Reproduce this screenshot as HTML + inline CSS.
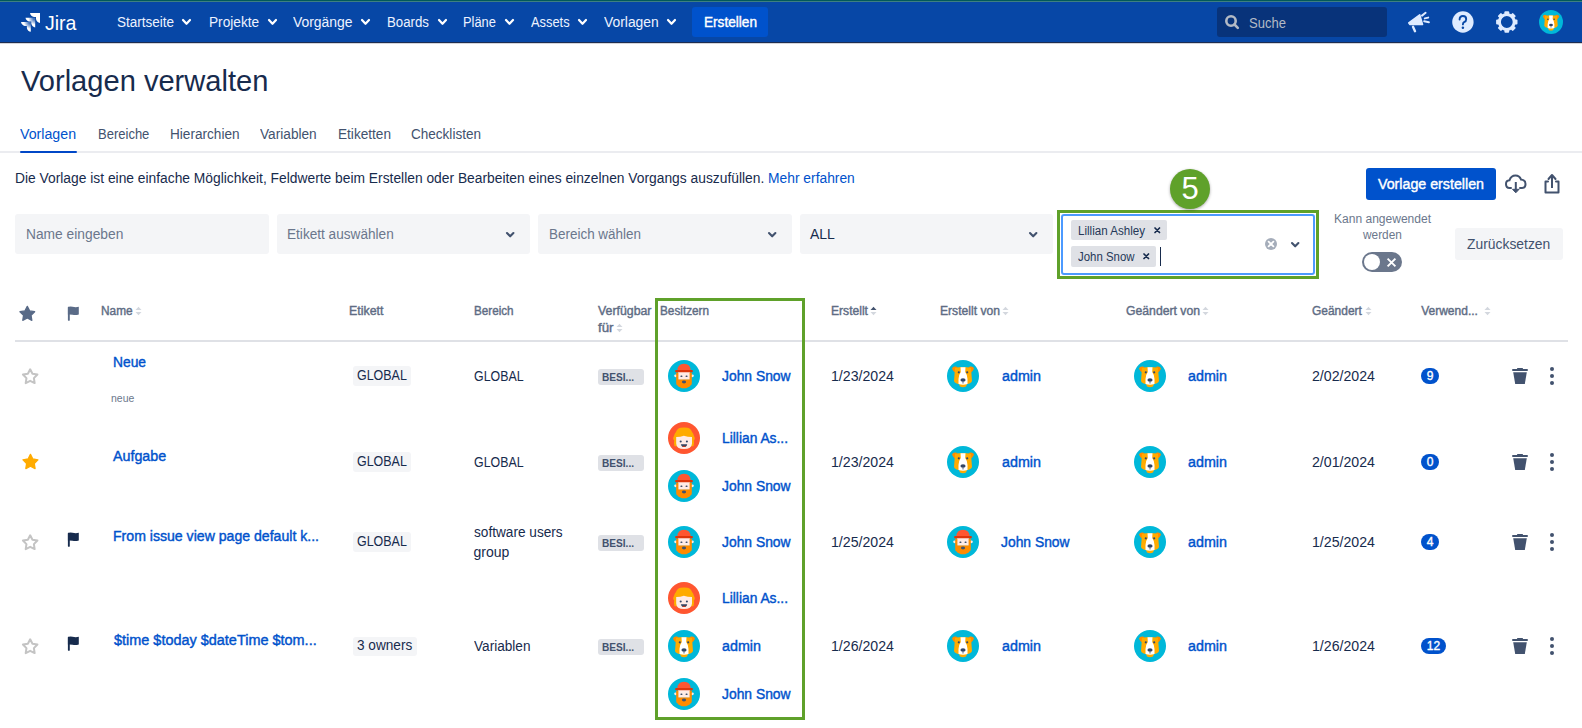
<!DOCTYPE html>
<html><head><meta charset="utf-8">
<style>
*{box-sizing:border-box;margin:0;padding:0}
html,body{width:1582px;height:728px;overflow:hidden;background:#fff}
body{position:relative;font-family:"Liberation Sans",sans-serif;color:#172b4d}
.a{position:absolute}
.t{position:absolute;white-space:nowrap;line-height:1}
svg{display:block;overflow:visible}
</style></head><body>
<svg width="0" height="0" style="position:absolute"><defs>
<symbol id="dog" viewBox="0 0 32 32">
<circle cx="16" cy="16" r="16" fill="#00b8d9"/>
<path d="M5 8.5 Q6 6 9 6.5 L11 8 L10 13 Q6.5 12.5 5 8.5Z" fill="#ff8b00"/>
<path d="M27 8.5 Q26 6 23 6.5 L21 8 L22 13 Q25.5 12.5 27 8.5Z" fill="#ff8b00"/>
<path d="M8 8 Q16 6 24 8 L25 21 Q24 23.5 20 24 L19 26.5 Q16 28 13 26.5 L12 24 Q8 23.5 7 21Z" fill="#ffab00"/>
<path d="M13.5 7.3 H18.5 L18.2 12 Q20.5 15 20.5 19 L20.5 24 Q16 25.5 11.5 24 L11.5 19 Q11.5 15 13.8 12Z" fill="#fff"/>
<circle cx="11.8" cy="12.3" r="1.1" fill="#344563"/><circle cx="20.2" cy="12.3" r="1.1" fill="#344563"/>
<ellipse cx="16" cy="20" rx="2.6" ry="1.7" fill="#344563"/>
<path d="M16 21.5 V23.5" stroke="#344563" stroke-width="0.8"/>
</symbol>
<symbol id="john" viewBox="0 0 32 32">
<circle cx="16" cy="16" r="16" fill="#00b8d9"/>
<circle cx="7.6" cy="15.8" r="1.4" fill="#ffebe6"/><circle cx="24.4" cy="15.8" r="1.4" fill="#ffebe6"/>
<rect x="10" y="11" width="12" height="8.8" fill="#ffebe6"/>
<path d="M8.2 12.5 H10.4 V19.6 H21.6 V12.5 H23.8 V23.2 Q23.8 25.2 22.4 25.6 Q21.8 27.4 19.6 27.4 Q18.2 28.4 16 28.3 Q13.8 28.4 12.4 27.4 Q10.2 27.4 9.6 25.6 Q8.2 25.2 8.2 23.2Z" fill="#ff8b00"/>
<ellipse cx="16" cy="22" rx="2.1" ry="1.4" fill="#42526e"/>
<rect x="12.5" y="15.6" width="1.9" height="1.5" fill="#42526e" rx=".5"/><rect x="17.6" y="15.6" width="1.9" height="1.5" fill="#42526e" rx=".5"/>
<path d="M9.4 10.6 Q9.4 3.7 16 3.7 Q22.6 3.7 22.6 10.6Z" fill="#ff5630"/>
<rect x="7.2" y="10" width="17.6" height="2.2" rx=".8" fill="#de350b"/>
</symbol>
<symbol id="lil" viewBox="0 0 32 32">
<circle cx="16" cy="16" r="16" fill="#ff5630"/>
<path d="M6.5 24.3 Q5.5 21 6.2 18.5 Q4.3 16.5 6 14 Q6.5 11.5 8 10 Q9 6.5 12.5 5.8 Q16 5 19.5 5.8 Q23 6.5 24 10 Q25.5 11.5 26 14 Q27.7 16.5 25.8 18.5 Q26.5 21 25.5 24.3 Z" fill="#ffab00"/>
<path d="M8.2 15 Q12.5 15 15.9 13.8 Q19.5 15 24 15 L24 21.5 Q23.6 27.1 16 27.1 Q8.4 27.1 8.2 21.5Z" fill="#ffebe6"/>
<circle cx="12.7" cy="19.5" r="1.05" fill="#344563"/><circle cx="18.9" cy="19.5" r="1.05" fill="#344563"/>
<path d="M12.9 22.3 H19.2 Q18.8 25.1 16 25.1 Q13.3 25.1 12.9 22.3Z" fill="#344563"/>
<path d="M14.4 24.3 Q16 23.4 17.7 24.3 Q16.9 25 16 25 Q15.1 25 14.4 24.3Z" fill="#de350b"/>
</symbol>
<symbol id="star" viewBox="0 0 24 24"><path d="M12.00 3.90 L14.70 9.18 L20.56 10.12 L16.37 14.32 L17.29 20.18 L12.00 17.50 L6.71 20.18 L7.63 14.32 L3.44 10.12 L9.30 9.18Z" stroke-linejoin="round"/></symbol>
<symbol id="flag" viewBox="0 0 12 15"><rect x="0.9" y="0.8" width="1.9" height="14" rx=".9"/><path d="M0.9 0.9 Q3 0.2 5.5 0.7 Q8.5 1.5 11.8 0.8 V8.6 Q8.5 9.5 5.5 8.8 Q3 8.2 0.9 8.5 Z"/></symbol>
<symbol id="trash" viewBox="0 0 16 17"><rect x="5" y="0" width="6" height="2" rx=".6"/><rect x="0" y="1.1" width="16" height="2" rx="1"/><path d="M1.2 4.2 H14.8 L12.8 16.1 H3.2 Z"/></symbol>
<symbol id="more" viewBox="0 0 6 18"><circle cx="3" cy="2" r="2"/><circle cx="3" cy="9" r="2"/><circle cx="3" cy="16" r="2"/></symbol>
</defs></svg>
<div class="a" style="left:0px;top:0px;width:1582px;height:43px;background:#0747a6;"></div>
<div class="a" style="left:0px;top:0px;width:1582px;height:1px;background:#02595b;"></div>
<div class="a" style="left:0px;top:1px;width:1582px;height:1px;background:#3e8080;"></div>
<div class="a" style="left:0px;top:42px;width:1582px;height:1px;background:#1d2d50;"></div>
<div class="a" style="left:0px;top:43px;width:1582px;height:1px;background:#d4d5da;"></div>
<svg class="a" style="left:18px;top:10px;" width="26" height="24" viewBox="0 0 26 24"><defs><radialGradient id="jg" cx="10" cy="0" r="11" gradientUnits="userSpaceOnUse"><stop offset="0.2" stop-color="#fff" stop-opacity="0.25"/><stop offset="0.65" stop-color="#fff" stop-opacity="1"/></radialGradient></defs>
<path transform="translate(12 3)" d="M0 0 L10 0 L10 10 C8.2 9.7 6.3 8.2 6 6 L6 4 L4 4 C2 3.7 0.3 2 0 0 Z" fill="#fff"/>
<path transform="translate(7.5 7.7) scale(0.97)" d="M0 0 L10 0 L10 10 C8.2 9.7 6.3 8.2 6 6 L6 4 L4 4 C2 3.7 0.3 2 0 0 Z" fill="url(#jg)"/>
<path transform="translate(3 12) scale(0.98)" d="M0 0 L10 0 L10 10 C8.2 9.7 6.3 8.2 6 6 L6 4 L4 4 C2 3.7 0.3 2 0 0 Z" fill="url(#jg)"/></svg>
<div class="t" style="left:44.70px;top:12.42px;font-size:21px;color:#fff;transform:scaleX(0.9292);transform-origin:0 0;">Jira</div>
<div class="t" style="left:117.20px;top:15.15px;font-size:14px;color:#eef3ff;transform:scaleX(0.9645);transform-origin:0 0;">Startseite</div>
<svg class="a" style="left:182px;top:19px;" width="9" height="6" viewBox="0 0 9 6"><path d="M1 1 L4.5 4.8 L8 1" fill="none" stroke="#fff" stroke-width="2.2" stroke-linecap="round" stroke-linejoin="round"/></svg>
<div class="t" style="left:208.70px;top:15.15px;font-size:14px;color:#eef3ff;transform:scaleX(0.9767);transform-origin:0 0;">Projekte</div>
<svg class="a" style="left:267.5px;top:19px;" width="9" height="6" viewBox="0 0 9 6"><path d="M1 1 L4.5 4.8 L8 1" fill="none" stroke="#fff" stroke-width="2.2" stroke-linecap="round" stroke-linejoin="round"/></svg>
<div class="t" style="left:293.00px;top:15.15px;font-size:14px;color:#eef3ff;transform:scaleX(0.9933);transform-origin:0 0;">Vorgänge</div>
<svg class="a" style="left:361px;top:19px;" width="9" height="6" viewBox="0 0 9 6"><path d="M1 1 L4.5 4.8 L8 1" fill="none" stroke="#fff" stroke-width="2.2" stroke-linecap="round" stroke-linejoin="round"/></svg>
<div class="t" style="left:387.00px;top:15.15px;font-size:14px;color:#eef3ff;transform:scaleX(0.9459);transform-origin:0 0;">Boards</div>
<svg class="a" style="left:437.5px;top:19px;" width="9" height="6" viewBox="0 0 9 6"><path d="M1 1 L4.5 4.8 L8 1" fill="none" stroke="#fff" stroke-width="2.2" stroke-linecap="round" stroke-linejoin="round"/></svg>
<div class="t" style="left:463.40px;top:15.15px;font-size:14px;color:#eef3ff;transform:scaleX(0.9190);transform-origin:0 0;">Pläne</div>
<svg class="a" style="left:505px;top:19px;" width="9" height="6" viewBox="0 0 9 6"><path d="M1 1 L4.5 4.8 L8 1" fill="none" stroke="#fff" stroke-width="2.2" stroke-linecap="round" stroke-linejoin="round"/></svg>
<div class="t" style="left:530.70px;top:15.15px;font-size:14px;color:#eef3ff;transform:scaleX(0.9190);transform-origin:0 0;">Assets</div>
<svg class="a" style="left:578px;top:19px;" width="9" height="6" viewBox="0 0 9 6"><path d="M1 1 L4.5 4.8 L8 1" fill="none" stroke="#fff" stroke-width="2.2" stroke-linecap="round" stroke-linejoin="round"/></svg>
<div class="t" style="left:603.60px;top:15.15px;font-size:14px;color:#eef3ff;transform:scaleX(0.9910);transform-origin:0 0;">Vorlagen</div>
<svg class="a" style="left:667px;top:19px;" width="9" height="6" viewBox="0 0 9 6"><path d="M1 1 L4.5 4.8 L8 1" fill="none" stroke="#fff" stroke-width="2.2" stroke-linecap="round" stroke-linejoin="round"/></svg>
<div class="a" style="left:692px;top:7px;width:76px;height:30px;background:#0052cc;border-radius:3px"></div>
<div class="t" style="left:704.00px;top:14.95px;font-size:14px;color:#fff;-webkit-text-stroke:0.4px #fff;transform:scaleX(0.9725);transform-origin:0 0;">Erstellen</div>
<div class="a" style="left:1217px;top:7px;width:170px;height:30px;background:#08337a;border-radius:3px"></div>
<svg class="a" style="left:1224px;top:14px;" width="16" height="16" viewBox="0 0 16 16"><circle cx="7" cy="7" r="4.7" fill="none" stroke="#b3bac5" stroke-width="2.6"/><path d="M10.5 10.5 L13.8 13.8" stroke="#b3bac5" stroke-width="2.6" stroke-linecap="round"/></svg>
<div class="t" style="left:1249.00px;top:16.15px;font-size:14px;color:#b3bac5;transform:scaleX(0.9320);transform-origin:0 0;">Suche</div>
<svg class="a" style="left:1400px;top:6px;" width="32" height="30" viewBox="0 0 32 30"><path d="M8.8 16.9 L19.7 8.8 L22.5 18.4 L10 18.4 Z" fill="#deebff" stroke="#deebff" stroke-width="1.6" stroke-linejoin="round"/>
<path d="M13 20.8 L15 25.2" stroke="#deebff" stroke-width="2.4" stroke-linecap="round"/>
<path d="M22 9.6 L25.6 6.8 M24.8 12.4 L28.2 11.6 M24.2 15.3 L28.9 16.3" stroke="#deebff" stroke-width="2" stroke-linecap="round"/></svg>
<svg class="a" style="left:1451px;top:11px;" width="24" height="24" viewBox="0 0 24 24"><circle cx="11.9" cy="11" r="10.7" fill="#deebff"/>
<path d="M8.6 8.6 Q8.6 5 11.9 5 Q15.2 5 15.2 8.2 Q15.2 10.3 13.1 11.2 Q11.9 11.8 11.9 13.4" fill="none" stroke="#0747a6" stroke-width="1.9" stroke-linecap="round"/>
<circle cx="11.9" cy="16.8" r="1.25" fill="#0747a6"/></svg>
<svg class="a" style="left:1495px;top:11px;" width="24" height="24" viewBox="0 0 24 24"><g transform="translate(11.8 11)"><rect x="-2.4" y="-10.7" width="4.8" height="4.5" rx="1" fill="#deebff" transform="rotate(0)"/><rect x="-2.4" y="-10.7" width="4.8" height="4.5" rx="1" fill="#deebff" transform="rotate(45)"/><rect x="-2.4" y="-10.7" width="4.8" height="4.5" rx="1" fill="#deebff" transform="rotate(90)"/><rect x="-2.4" y="-10.7" width="4.8" height="4.5" rx="1" fill="#deebff" transform="rotate(135)"/><rect x="-2.4" y="-10.7" width="4.8" height="4.5" rx="1" fill="#deebff" transform="rotate(180)"/><rect x="-2.4" y="-10.7" width="4.8" height="4.5" rx="1" fill="#deebff" transform="rotate(225)"/><rect x="-2.4" y="-10.7" width="4.8" height="4.5" rx="1" fill="#deebff" transform="rotate(270)"/><rect x="-2.4" y="-10.7" width="4.8" height="4.5" rx="1" fill="#deebff" transform="rotate(315)"/><circle r="7.4" fill="none" stroke="#deebff" stroke-width="3"/></g></svg>
<!--NAVAV-->
<div class="t" style="left:21.00px;top:66.75px;font-size:29px;color:#172b4d;transform:scaleX(1.0028);transform-origin:0 0;">Vorlagen verwalten</div>
<div class="t" style="left:20.30px;top:126.65px;font-size:14px;color:#0052cc;transform:scaleX(1.0145);transform-origin:0 0;">Vorlagen</div>
<div class="t" style="left:97.60px;top:126.65px;font-size:14px;color:#42526e;transform:scaleX(0.9295);transform-origin:0 0;">Bereiche</div>
<div class="t" style="left:170.00px;top:126.65px;font-size:14px;color:#42526e;transform:scaleX(0.9721);transform-origin:0 0;">Hierarchien</div>
<div class="t" style="left:259.60px;top:126.65px;font-size:14px;color:#42526e;transform:scaleX(0.9759);transform-origin:0 0;">Variablen</div>
<div class="t" style="left:337.50px;top:126.65px;font-size:14px;color:#42526e;transform:scaleX(0.9725);transform-origin:0 0;">Etiketten</div>
<div class="t" style="left:411.00px;top:126.65px;font-size:14px;color:#42526e;transform:scaleX(0.9669);transform-origin:0 0;">Checklisten</div>
<div class="a" style="left:0px;top:151px;width:1582px;height:2px;background:#ebecf0;"></div>
<div class="a" style="left:20px;top:151px;width:57px;height:2px;background:#0047c7;border-radius:1px"></div>
<div class="t" style="left:14.90px;top:171.15px;font-size:14px;color:#172b4d;transform:scaleX(0.9864);transform-origin:0 0;">Die Vorlage ist eine einfache Möglichkeit, Feldwerte beim Erstellen oder Bearbeiten eines einzelnen Vorgangs auszufüllen. <span style="color:#0052cc">Mehr erfahren</span></div>
<div class="a" style="left:15px;top:214px;width:254px;height:40px;background:#f4f5f7;border-radius:3px"></div>
<div class="t" style="left:25.70px;top:227.15px;font-size:14px;color:#6b778c;transform:scaleX(0.9848);transform-origin:0 0;">Name eingeben</div>
<div class="a" style="left:277px;top:214px;width:253px;height:40px;background:#f4f5f7;border-radius:3px"></div>
<div class="t" style="left:287.00px;top:227.15px;font-size:14px;color:#6b778c;transform:scaleX(0.9727);transform-origin:0 0;">Etikett auswählen</div>
<svg class="a" style="left:506.3px;top:231.9px;" width="8.4" height="5.5" viewBox="0 0 8.4 5.5"><path d="M1 1 L4.2 4.3 L7.4 1" fill="none" stroke="#42526e" stroke-width="2.1" stroke-linecap="round" stroke-linejoin="round"/></svg>
<div class="a" style="left:538px;top:214px;width:254px;height:40px;background:#f4f5f7;border-radius:3px"></div>
<div class="t" style="left:549.00px;top:227.15px;font-size:14px;color:#6b778c;transform:scaleX(0.9613);transform-origin:0 0;">Bereich wählen</div>
<svg class="a" style="left:767.8px;top:231.9px;" width="8.4" height="5.5" viewBox="0 0 8.4 5.5"><path d="M1 1 L4.2 4.3 L7.4 1" fill="none" stroke="#42526e" stroke-width="2.1" stroke-linecap="round" stroke-linejoin="round"/></svg>
<div class="a" style="left:800px;top:214px;width:253px;height:40px;background:#f4f5f7;border-radius:3px"></div>
<div class="t" style="left:810.00px;top:227.15px;font-size:14px;color:#172b4d;">ALL</div>
<svg class="a" style="left:1029px;top:231.9px;" width="8.4" height="5.5" viewBox="0 0 8.4 5.5"><path d="M1 1 L4.2 4.3 L7.4 1" fill="none" stroke="#42526e" stroke-width="2.1" stroke-linecap="round" stroke-linejoin="round"/></svg>
<div class="a" style="left:1057px;top:210px;width:262px;height:69px;background:transparent;border:3px solid #5fa12a"></div>
<div class="a" style="left:1061px;top:214px;width:254px;height:61px;background:#fff;border:2px solid #4c9aff;border-radius:3px"></div>
<div class="a" style="left:1071px;top:220px;width:96px;height:20px;background:#dfe1e6;border-radius:2px"></div>
<div class="t" style="left:1078.00px;top:224.84px;font-size:12px;color:#253858;transform:scaleX(0.9654);transform-origin:0 0;">Lillian Ashley</div>
<svg class="a" style="left:1154px;top:227.3px;" width="6.5" height="6.5" viewBox="0 0 6.5 6.5"><path d="M1 1 L5.5 5.5 M5.5 1 L1 5.5" stroke="#172b4d" stroke-width="1.7" stroke-linecap="round"/></svg>
<div class="a" style="left:1071px;top:246px;width:85px;height:21px;background:#dfe1e6;border-radius:2px"></div>
<div class="t" style="left:1077.50px;top:250.84px;font-size:12px;color:#253858;transform:scaleX(0.9512);transform-origin:0 0;">John Snow</div>
<svg class="a" style="left:1143px;top:253.3px;" width="6.5" height="6.5" viewBox="0 0 6.5 6.5"><path d="M1 1 L5.5 5.5 M5.5 1 L1 5.5" stroke="#172b4d" stroke-width="1.7" stroke-linecap="round"/></svg>
<div class="a" style="left:1160px;top:247px;width:1px;height:19px;background:#172b4d;"></div>
<svg class="a" style="left:1265px;top:238px;" width="12" height="12" viewBox="0 0 12 12"><circle cx="6" cy="6" r="6" fill="#a5adba"/><path d="M3.6 3.6 L8.4 8.4 M8.4 3.6 L3.6 8.4" stroke="#fff" stroke-width="1.8" stroke-linecap="round"/></svg>
<svg class="a" style="left:1291px;top:242px;" width="8.4" height="5.5" viewBox="0 0 8.4 5.5"><path d="M1 1 L4.2 4.3 L7.4 1" fill="none" stroke="#42526e" stroke-width="2.1" stroke-linecap="round" stroke-linejoin="round"/></svg>
<div class="a" style="left:1170px;top:169px;width:40px;height:40px;border-radius:50%;background:#5fa12a;box-shadow:0 1px 3px rgba(0,0,0,.35)"></div>
<div class="t" style="left:1181.50px;top:172.95px;font-size:31px;color:#fff;">5</div>
<div class="a" style="left:1366px;top:168px;width:130px;height:32px;background:#0052cc;border-radius:3px"></div>
<div class="t" style="left:1378.00px;top:176.75px;font-size:14px;color:#fff;-webkit-text-stroke:0.4px #fff;transform:scaleX(1.0163);transform-origin:0 0;">Vorlage erstellen</div>
<svg class="a" style="left:1504px;top:173.2px;" width="24" height="21" viewBox="0 0 24 21"><path d="M7 15 H5.5 Q2 15 2 11 Q2 7.5 5.5 7.3 Q7 2.5 11.5 2.5 Q15.5 2.5 17 6.5 Q21.5 7 21.5 11 Q21.5 15 18 15 H16" fill="none" stroke="#42526e" stroke-width="2" stroke-linecap="round"/><path d="M11.8 9 V18" stroke="#42526e" stroke-width="2"/><path d="M8.5 16.3 L11.8 19.8 L15.1 16.3Z" fill="#42526e" stroke="#42526e" stroke-width="1" stroke-linejoin="round"/></svg>
<svg class="a" style="left:1543px;top:173px;" width="18" height="21" viewBox="0 0 18 21"><path d="M5 8.5 H2.5 V19.5 H15.5 V8.5 H13" fill="none" stroke="#42526e" stroke-width="2" stroke-linejoin="round" stroke-linecap="round"/><path d="M9 2.5 V15" stroke="#42526e" stroke-width="2"/><path d="M5.5 6 L9 2 L12.5 6" fill="none" stroke="#42526e" stroke-width="2" stroke-linecap="round" stroke-linejoin="round"/></svg>
<div class="t" style="left:1334.00px;top:212.84px;font-size:12px;color:#6b778c;transform:scaleX(1.0031);transform-origin:0 0;">Kann angewendet</div>
<div class="t" style="left:1363.10px;top:229.14px;font-size:12px;color:#6b778c;transform:scaleX(0.9873);transform-origin:0 0;">werden</div>
<div class="a" style="left:1362px;top:252px;width:40px;height:20px;background:#6b778c;border-radius:10px"></div>
<div class="a" style="left:1364px;top:254px;width:16px;height:16px;border-radius:50%;background:#fff"></div>
<svg class="a" style="left:1386.5px;top:257.5px;" width="9" height="9" viewBox="0 0 9 9"><path d="M1.3 1.3 L7.7 7.7 M7.7 1.3 L1.3 7.7" stroke="#fff" stroke-width="1.9" stroke-linecap="square"/></svg>
<div class="a" style="left:1455px;top:228px;width:108px;height:32px;background:#f4f5f7;border-radius:3px"></div>
<div class="t" style="left:1466.80px;top:236.95px;font-size:14px;color:#42526e;transform:scaleX(0.9905);transform-origin:0 0;">Zurücksetzen</div>
<svg class="a" style="left:1539.0px;top:10.0px" width="24" height="24"><use href="#dog" width="24" height="24" /></svg>
<svg class="a" style="left:16.7px;top:303.3px" width="20.6" height="20.6"><use href="#star" width="20.6" height="20.6" fill="#586a87" stroke="#586a87" stroke-width="1.5"/></svg>
<svg class="a" style="left:67px;top:305.8px" width="12" height="15"><use href="#flag" width="12" height="15" fill="#5a6b87"/></svg>
<div class="t" style="left:101.40px;top:305.24px;font-size:12px;color:#5e6c84;-webkit-text-stroke:0.4px #5e6c84;transform:scaleX(0.9875);transform-origin:0 0;">Name</div>
<svg class="a" style="left:134.5px;top:306px;" width="7" height="10" viewBox="0 0 7 10"><path d="M0.5 4 L3.5 0.8 L6.5 4Z" fill="#d3d7de"/><path d="M0.5 6 L3.5 9.2 L6.5 6Z" fill="#d3d7de"/></svg>
<div class="t" style="left:349.20px;top:305.24px;font-size:12px;color:#5e6c84;-webkit-text-stroke:0.4px #5e6c84;transform:scaleX(1.0330);transform-origin:0 0;">Etikett</div>
<div class="t" style="left:473.50px;top:305.24px;font-size:12px;color:#5e6c84;-webkit-text-stroke:0.4px #5e6c84;transform:scaleX(0.9730);transform-origin:0 0;">Bereich</div>
<div class="t" style="left:597.60px;top:305.24px;font-size:12px;color:#5e6c84;-webkit-text-stroke:0.4px #5e6c84;transform:scaleX(1.0269);transform-origin:0 0;">Verfügbar</div>
<div class="t" style="left:597.60px;top:321.54px;font-size:12px;color:#5e6c84;-webkit-text-stroke:0.4px #5e6c84;transform:scaleX(1.1071);transform-origin:0 0;">für</div>
<svg class="a" style="left:616px;top:322.5px;" width="7" height="10" viewBox="0 0 7 10"><path d="M0.5 4 L3.5 0.8 L6.5 4Z" fill="#d3d7de"/><path d="M0.5 6 L3.5 9.2 L6.5 6Z" fill="#d3d7de"/></svg>
<div class="t" style="left:660.20px;top:305.24px;font-size:12px;color:#5e6c84;-webkit-text-stroke:0.4px #5e6c84;transform:scaleX(0.9800);transform-origin:0 0;">Besitzern</div>
<div class="t" style="left:831.10px;top:305.24px;font-size:12px;color:#5e6c84;-webkit-text-stroke:0.4px #5e6c84;transform:scaleX(1.0082);transform-origin:0 0;">Erstellt</div>
<svg class="a" style="left:870px;top:306px;" width="7" height="10" viewBox="0 0 7 10"><path d="M0.5 4 L3.5 0.8 L6.5 4Z" fill="#42526e"/><path d="M0.5 6 L3.5 9.2 L6.5 6Z" fill="#d3d7de"/></svg>
<div class="t" style="left:939.60px;top:305.24px;font-size:12px;color:#5e6c84;-webkit-text-stroke:0.4px #5e6c84;transform:scaleX(1.0101);transform-origin:0 0;">Erstellt von</div>
<svg class="a" style="left:1002px;top:306px;" width="7" height="10" viewBox="0 0 7 10"><path d="M0.5 4 L3.5 0.8 L6.5 4Z" fill="#d3d7de"/><path d="M0.5 6 L3.5 9.2 L6.5 6Z" fill="#d3d7de"/></svg>
<div class="t" style="left:1125.70px;top:305.24px;font-size:12px;color:#5e6c84;-webkit-text-stroke:0.4px #5e6c84;transform:scaleX(1.0179);transform-origin:0 0;">Geändert von</div>
<svg class="a" style="left:1202px;top:306px;" width="7" height="10" viewBox="0 0 7 10"><path d="M0.5 4 L3.5 0.8 L6.5 4Z" fill="#d3d7de"/><path d="M0.5 6 L3.5 9.2 L6.5 6Z" fill="#d3d7de"/></svg>
<div class="t" style="left:1312.20px;top:305.24px;font-size:12px;color:#5e6c84;-webkit-text-stroke:0.4px #5e6c84;transform:scaleX(0.9960);transform-origin:0 0;">Geändert</div>
<svg class="a" style="left:1365px;top:306px;" width="7" height="10" viewBox="0 0 7 10"><path d="M0.5 4 L3.5 0.8 L6.5 4Z" fill="#d3d7de"/><path d="M0.5 6 L3.5 9.2 L6.5 6Z" fill="#d3d7de"/></svg>
<div class="t" style="left:1421.20px;top:305.24px;font-size:12px;color:#5e6c84;-webkit-text-stroke:0.4px #5e6c84;">Verwend...</div>
<svg class="a" style="left:1484px;top:306px;" width="7" height="10" viewBox="0 0 7 10"><path d="M0.5 4 L3.5 0.8 L6.5 4Z" fill="#d3d7de"/><path d="M0.5 6 L3.5 9.2 L6.5 6Z" fill="#d3d7de"/></svg>
<div class="a" style="left:15px;top:340px;width:1553px;height:2px;background:#dfe1e6;"></div>
<svg class="a" style="left:19.7px;top:365.7px" width="20.35" height="20.35"><use href="#star" width="20.35" height="20.35" fill="none" stroke="#c4c4c4" stroke-width="2.36"/></svg>
<div class="t" style="left:113.40px;top:354.95px;font-size:14px;color:#0052cc;-webkit-text-stroke:0.4px #0052cc;transform:scaleX(0.9851);transform-origin:0 0;">Neue</div>
<div class="t" style="left:111.00px;top:392.69px;font-size:11px;color:#6b778c;transform:scaleX(0.9510);transform-origin:0 0;">neue</div>
<div class="a" style="left:353px;top:366px;width:58px;height:20px;background:#f4f5f7;border-radius:3px"></div>
<div class="t" style="left:357.00px;top:368.15px;font-size:14px;color:#172b4d;transform:scaleX(0.8893);transform-origin:0 0;">GLOBAL</div>
<div class="t" style="left:473.50px;top:368.85px;font-size:14px;color:#172b4d;transform:scaleX(0.8839);transform-origin:0 0;">GLOBAL</div>
<div class="a" style="left:598px;top:369px;width:46px;height:16px;background:#dfe1e6;border-radius:3px"></div>
<div class="t" style="left:602.00px;top:371.69px;font-size:11px;color:#42526e;font-weight:bold;transform:scaleX(0.9195);transform-origin:0 0;">BESI...</div>
<svg class="a" style="left:668.0px;top:360.0px" width="32" height="32"><use href="#john" width="32" height="32" /></svg>
<div class="t" style="left:722.00px;top:369.15px;font-size:14px;color:#0052cc;-webkit-text-stroke:0.4px #0052cc;transform:scaleX(0.9899);transform-origin:0 0;">John Snow</div>
<div class="t" style="left:831.00px;top:369.15px;font-size:14px;color:#172b4d;transform:scaleX(1.0112);transform-origin:0 0;">1/23/2024</div>
<svg class="a" style="left:947.0px;top:360.0px" width="32" height="32"><use href="#dog" width="32" height="32" /></svg>
<div class="t" style="left:1002.00px;top:369.15px;font-size:14px;color:#0052cc;-webkit-text-stroke:0.4px #0052cc;transform:scaleX(1.0210);transform-origin:0 0;">admin</div>
<svg class="a" style="left:1134.0px;top:360.0px" width="32" height="32"><use href="#dog" width="32" height="32" /></svg>
<div class="t" style="left:1188.00px;top:369.15px;font-size:14px;color:#0052cc;-webkit-text-stroke:0.4px #0052cc;transform:scaleX(1.0210);transform-origin:0 0;">admin</div>
<div class="t" style="left:1312.00px;top:369.15px;font-size:14px;color:#172b4d;transform:scaleX(1.0112);transform-origin:0 0;">2/02/2024</div>
<div class="a" style="left:1421px;top:368px;width:18px;height:16px;border-radius:8px;background:#0052cc;color:#fff;font-size:12px;-webkit-text-stroke:0.35px #fff;line-height:17px;text-align:center">9</div>
<svg class="a" style="left:1512px;top:367.9px" width="16" height="17"><use href="#trash" width="16" height="17" fill="#42526e"/></svg>
<svg class="a" style="left:1549px;top:367px" width="6" height="18"><use href="#more" width="6" height="18" fill="#42526e"/></svg>
<svg class="a" style="left:19.66px;top:451.1px" width="20.9" height="20.9"><use href="#star" width="20.9" height="20.9" fill="#ffab00" stroke="#ffab00" stroke-width="1.5"/></svg>
<div class="t" style="left:113.30px;top:449.45px;font-size:14px;color:#0052cc;-webkit-text-stroke:0.4px #0052cc;transform:scaleX(1.0192);transform-origin:0 0;">Aufgabe</div>
<div class="a" style="left:353px;top:452px;width:58px;height:20px;background:#f4f5f7;border-radius:3px"></div>
<div class="t" style="left:357.00px;top:454.15px;font-size:14px;color:#172b4d;transform:scaleX(0.8893);transform-origin:0 0;">GLOBAL</div>
<div class="t" style="left:473.50px;top:454.95px;font-size:14px;color:#172b4d;transform:scaleX(0.8839);transform-origin:0 0;">GLOBAL</div>
<div class="a" style="left:598px;top:455px;width:46px;height:16px;background:#dfe1e6;border-radius:3px"></div>
<div class="t" style="left:602.00px;top:457.69px;font-size:11px;color:#42526e;font-weight:bold;transform:scaleX(0.9195);transform-origin:0 0;">BESI...</div>
<svg class="a" style="left:668.0px;top:422.0px" width="32" height="32"><use href="#lil" width="32" height="32" /></svg>
<div class="t" style="left:722.00px;top:431.15px;font-size:14px;color:#0052cc;-webkit-text-stroke:0.4px #0052cc;transform:scaleX(0.9865);transform-origin:0 0;">Lillian As...</div>
<svg class="a" style="left:668.0px;top:470.0px" width="32" height="32"><use href="#john" width="32" height="32" /></svg>
<div class="t" style="left:722.00px;top:479.15px;font-size:14px;color:#0052cc;-webkit-text-stroke:0.4px #0052cc;transform:scaleX(0.9899);transform-origin:0 0;">John Snow</div>
<div class="t" style="left:831.00px;top:455.15px;font-size:14px;color:#172b4d;transform:scaleX(1.0112);transform-origin:0 0;">1/23/2024</div>
<svg class="a" style="left:947.0px;top:446.0px" width="32" height="32"><use href="#dog" width="32" height="32" /></svg>
<div class="t" style="left:1002.00px;top:455.15px;font-size:14px;color:#0052cc;-webkit-text-stroke:0.4px #0052cc;transform:scaleX(1.0210);transform-origin:0 0;">admin</div>
<svg class="a" style="left:1134.0px;top:446.0px" width="32" height="32"><use href="#dog" width="32" height="32" /></svg>
<div class="t" style="left:1188.00px;top:455.15px;font-size:14px;color:#0052cc;-webkit-text-stroke:0.4px #0052cc;transform:scaleX(1.0210);transform-origin:0 0;">admin</div>
<div class="t" style="left:1312.00px;top:455.15px;font-size:14px;color:#172b4d;transform:scaleX(1.0112);transform-origin:0 0;">2/01/2024</div>
<div class="a" style="left:1421px;top:454px;width:18px;height:16px;border-radius:8px;background:#0052cc;color:#fff;font-size:12px;-webkit-text-stroke:0.35px #fff;line-height:17px;text-align:center">0</div>
<svg class="a" style="left:1512px;top:453.9px" width="16" height="17"><use href="#trash" width="16" height="17" fill="#42526e"/></svg>
<svg class="a" style="left:1549px;top:453px" width="6" height="18"><use href="#more" width="6" height="18" fill="#42526e"/></svg>
<svg class="a" style="left:19.7px;top:531.7px" width="20.35" height="20.35"><use href="#star" width="20.35" height="20.35" fill="none" stroke="#c4c4c4" stroke-width="2.36"/></svg>
<svg class="a" style="left:67px;top:532.2px" width="12" height="15"><use href="#flag" width="12" height="15" fill="#172b4d"/></svg>
<div class="t" style="left:113.30px;top:529.15px;font-size:14px;color:#0052cc;-webkit-text-stroke:0.4px #0052cc;transform:scaleX(1.0068);transform-origin:0 0;">From issue view page default k...</div>
<div class="a" style="left:353px;top:532px;width:58px;height:20px;background:#f4f5f7;border-radius:3px"></div>
<div class="t" style="left:357.00px;top:534.15px;font-size:14px;color:#172b4d;transform:scaleX(0.8893);transform-origin:0 0;">GLOBAL</div>
<div class="t" style="left:473.50px;top:525.15px;font-size:14px;color:#172b4d;transform:scaleX(0.9736);transform-origin:0 0;">software users</div>
<div class="t" style="left:473.50px;top:545.15px;font-size:14px;color:#172b4d;">group</div>
<div class="a" style="left:598px;top:535px;width:46px;height:16px;background:#dfe1e6;border-radius:3px"></div>
<div class="t" style="left:602.00px;top:537.69px;font-size:11px;color:#42526e;font-weight:bold;transform:scaleX(0.9195);transform-origin:0 0;">BESI...</div>
<svg class="a" style="left:668.0px;top:526.0px" width="32" height="32"><use href="#john" width="32" height="32" /></svg>
<div class="t" style="left:722.00px;top:535.15px;font-size:14px;color:#0052cc;-webkit-text-stroke:0.4px #0052cc;transform:scaleX(0.9899);transform-origin:0 0;">John Snow</div>
<div class="t" style="left:831.00px;top:535.15px;font-size:14px;color:#172b4d;transform:scaleX(1.0112);transform-origin:0 0;">1/25/2024</div>
<svg class="a" style="left:947.0px;top:526.0px" width="32" height="32"><use href="#john" width="32" height="32" /></svg>
<div class="t" style="left:1001.00px;top:535.15px;font-size:14px;color:#0052cc;-webkit-text-stroke:0.4px #0052cc;transform:scaleX(0.9899);transform-origin:0 0;">John Snow</div>
<svg class="a" style="left:1134.0px;top:526.0px" width="32" height="32"><use href="#dog" width="32" height="32" /></svg>
<div class="t" style="left:1188.00px;top:535.15px;font-size:14px;color:#0052cc;-webkit-text-stroke:0.4px #0052cc;transform:scaleX(1.0210);transform-origin:0 0;">admin</div>
<div class="t" style="left:1312.00px;top:535.15px;font-size:14px;color:#172b4d;transform:scaleX(1.0112);transform-origin:0 0;">1/25/2024</div>
<div class="a" style="left:1421px;top:534px;width:18px;height:16px;border-radius:8px;background:#0052cc;color:#fff;font-size:12px;-webkit-text-stroke:0.35px #fff;line-height:17px;text-align:center">4</div>
<svg class="a" style="left:1512px;top:533.9px" width="16" height="17"><use href="#trash" width="16" height="17" fill="#42526e"/></svg>
<svg class="a" style="left:1549px;top:533px" width="6" height="18"><use href="#more" width="6" height="18" fill="#42526e"/></svg>
<svg class="a" style="left:19.7px;top:635.7px" width="20.35" height="20.35"><use href="#star" width="20.35" height="20.35" fill="none" stroke="#c4c4c4" stroke-width="2.36"/></svg>
<svg class="a" style="left:67px;top:636.2px" width="12" height="15"><use href="#flag" width="12" height="15" fill="#172b4d"/></svg>
<div class="t" style="left:113.70px;top:633.15px;font-size:14px;color:#0052cc;-webkit-text-stroke:0.4px #0052cc;transform:scaleX(1.0321);transform-origin:0 0;">$time $today $dateTime $tom...</div>
<div class="a" style="left:353px;top:636.5px;width:64px;height:19px;background:#f4f5f7;border-radius:3px"></div>
<div class="t" style="left:357.00px;top:638.15px;font-size:14px;color:#172b4d;transform:scaleX(0.9736);transform-origin:0 0;">3 owners</div>
<div class="t" style="left:473.50px;top:639.15px;font-size:14px;color:#172b4d;transform:scaleX(0.9725);transform-origin:0 0;">Variablen</div>
<div class="a" style="left:598px;top:639px;width:46px;height:16px;background:#dfe1e6;border-radius:3px"></div>
<div class="t" style="left:602.00px;top:641.69px;font-size:11px;color:#42526e;font-weight:bold;transform:scaleX(0.9195);transform-origin:0 0;">BESI...</div>
<svg class="a" style="left:668.0px;top:582.0px" width="32" height="32"><use href="#lil" width="32" height="32" /></svg>
<div class="t" style="left:722.00px;top:591.15px;font-size:14px;color:#0052cc;-webkit-text-stroke:0.4px #0052cc;transform:scaleX(0.9865);transform-origin:0 0;">Lillian As...</div>
<svg class="a" style="left:668.0px;top:630.0px" width="32" height="32"><use href="#dog" width="32" height="32" /></svg>
<div class="t" style="left:722.00px;top:639.15px;font-size:14px;color:#0052cc;-webkit-text-stroke:0.4px #0052cc;transform:scaleX(1.0210);transform-origin:0 0;">admin</div>
<svg class="a" style="left:668.0px;top:678.0px" width="32" height="32"><use href="#john" width="32" height="32" /></svg>
<div class="t" style="left:722.00px;top:687.15px;font-size:14px;color:#0052cc;-webkit-text-stroke:0.4px #0052cc;transform:scaleX(0.9899);transform-origin:0 0;">John Snow</div>
<div class="t" style="left:831.00px;top:639.15px;font-size:14px;color:#172b4d;transform:scaleX(1.0112);transform-origin:0 0;">1/26/2024</div>
<svg class="a" style="left:947.0px;top:630.0px" width="32" height="32"><use href="#dog" width="32" height="32" /></svg>
<div class="t" style="left:1002.00px;top:639.15px;font-size:14px;color:#0052cc;-webkit-text-stroke:0.4px #0052cc;transform:scaleX(1.0210);transform-origin:0 0;">admin</div>
<svg class="a" style="left:1134.0px;top:630.0px" width="32" height="32"><use href="#dog" width="32" height="32" /></svg>
<div class="t" style="left:1188.00px;top:639.15px;font-size:14px;color:#0052cc;-webkit-text-stroke:0.4px #0052cc;transform:scaleX(1.0210);transform-origin:0 0;">admin</div>
<div class="t" style="left:1312.00px;top:639.15px;font-size:14px;color:#172b4d;transform:scaleX(1.0112);transform-origin:0 0;">1/26/2024</div>
<div class="a" style="left:1421px;top:638px;width:25px;height:16px;border-radius:8px;background:#0052cc;color:#fff;font-size:12px;-webkit-text-stroke:0.35px #fff;line-height:17px;text-align:center">12</div>
<svg class="a" style="left:1512px;top:637.9px" width="16" height="17"><use href="#trash" width="16" height="17" fill="#42526e"/></svg>
<svg class="a" style="left:1549px;top:637px" width="6" height="18"><use href="#more" width="6" height="18" fill="#42526e"/></svg>
<div class="a" style="left:655px;top:298px;width:150px;height:422px;background:transparent;border:3px solid #5fa12a"></div>
</body></html>
